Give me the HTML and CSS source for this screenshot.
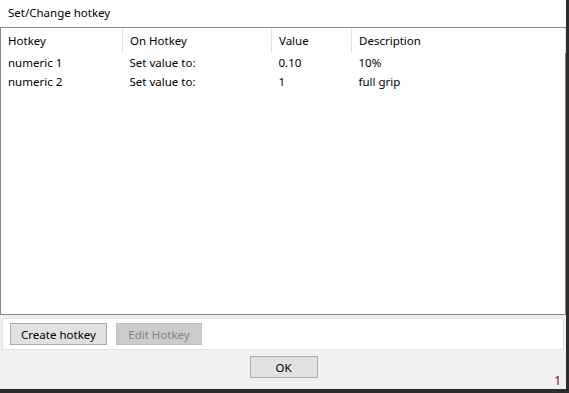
FILE: index.html
```html
<!DOCTYPE html>
<html lang="en">
<head>
    <meta charset="UTF-8">
    <meta name="viewport" content="width=device-width, initial-scale=1.0">
    <title>Set/Change hotkey</title>
    <link rel="stylesheet" href="styles.css">
</head>
<body>
<div class="window">
    <div class="titlebar">Set/Change hotkey</div>

    <div class="listview">
        <table>
            <thead>
                <tr>
                    <th class="col-key">Hotkey</th>
                    <th class="col-on">On Hotkey</th>
                    <th class="col-value">Value</th>
                    <th class="col-desc">Description</th>
                </tr>
            </thead>
            <tbody>
                <tr>
                    <td>numeric 1</td>
                    <td>Set value to:</td>
                    <td>0.10</td>
                    <td>10%</td>
                </tr>
                <tr>
                    <td>numeric 2</td>
                    <td>Set value to:</td>
                    <td>1</td>
                    <td>full grip</td>
                </tr>
            </tbody>
        </table>
    </div>

    <div class="actions">
        <button class="btn btn-create">Create hotkey</button>
        <button class="btn btn-edit" disabled>Edit Hotkey</button>
    </div>

    <div class="footer">
        <button class="btn btn-ok">OK</button>
        <span class="counter">1</span>
    </div>
</div>
</body>
</html>
```

FILE: styles.css
```css
body {
    font-family: 'Noto Sans', 'Open Sans', sans-serif;
    font-size: 11.5px;
    margin: 0;
    padding: 0;
    background-color: #2b2b2b;
}
.window {
    width: 566px;
    height: 389px;
    background-color: #f0f0f0;
    display: flex;
    flex-direction: column;
}
.titlebar {
    height: 27px;
    line-height: 26px;
    padding-left: 8px;
    background-color: #fff;
    color: #000;
}
.listview {
    height: 286px;
    border: 1px solid #828790;
    background-color: #fff;
}
table {
    border-collapse: collapse;
    table-layout: fixed;
    width: 565px;
}
th {
    height: 25px;
    padding: 0 0 0 7px;
    text-align: left;
    font-weight: normal;
    border-right: 1px solid #e5e5e5;
}
td {
    height: 19px;
    padding: 0 0 0 7px;
    white-space: nowrap;
}
.col-key { width: 114px; }
.col-on { width: 141px; }
.col-value { width: 72px; }
.actions {
    margin: 3px 2px 0 2px;
    height: 30px;
    border: 1px solid #e3e3e3;
    background-color: #fff;
    display: flex;
    align-items: center;
    gap: 9px;
    padding-left: 7px;
}
.btn {
    font-family: inherit;
    font-size: 11.5px;
    height: 22px;
    padding: 0;
    background-color: #e1e1e1;
    border: 1px solid #adadad;
    color: #000;
}
.btn-create { width: 97px; }
.btn-edit {
    width: 86px;
    background-color: #cccccc;
    border-color: #bfbfbf;
    color: #838383;
}
.footer {
    position: relative;
    flex: 1;
    display: flex;
    justify-content: center;
    padding-top: 6px;
    padding-left: 1px;
}
.btn-ok { width: 68px; }
.counter {
    position: absolute;
    right: 5px;
    bottom: 0;
    font-size: 12px;
    color: #800000;
}
```
